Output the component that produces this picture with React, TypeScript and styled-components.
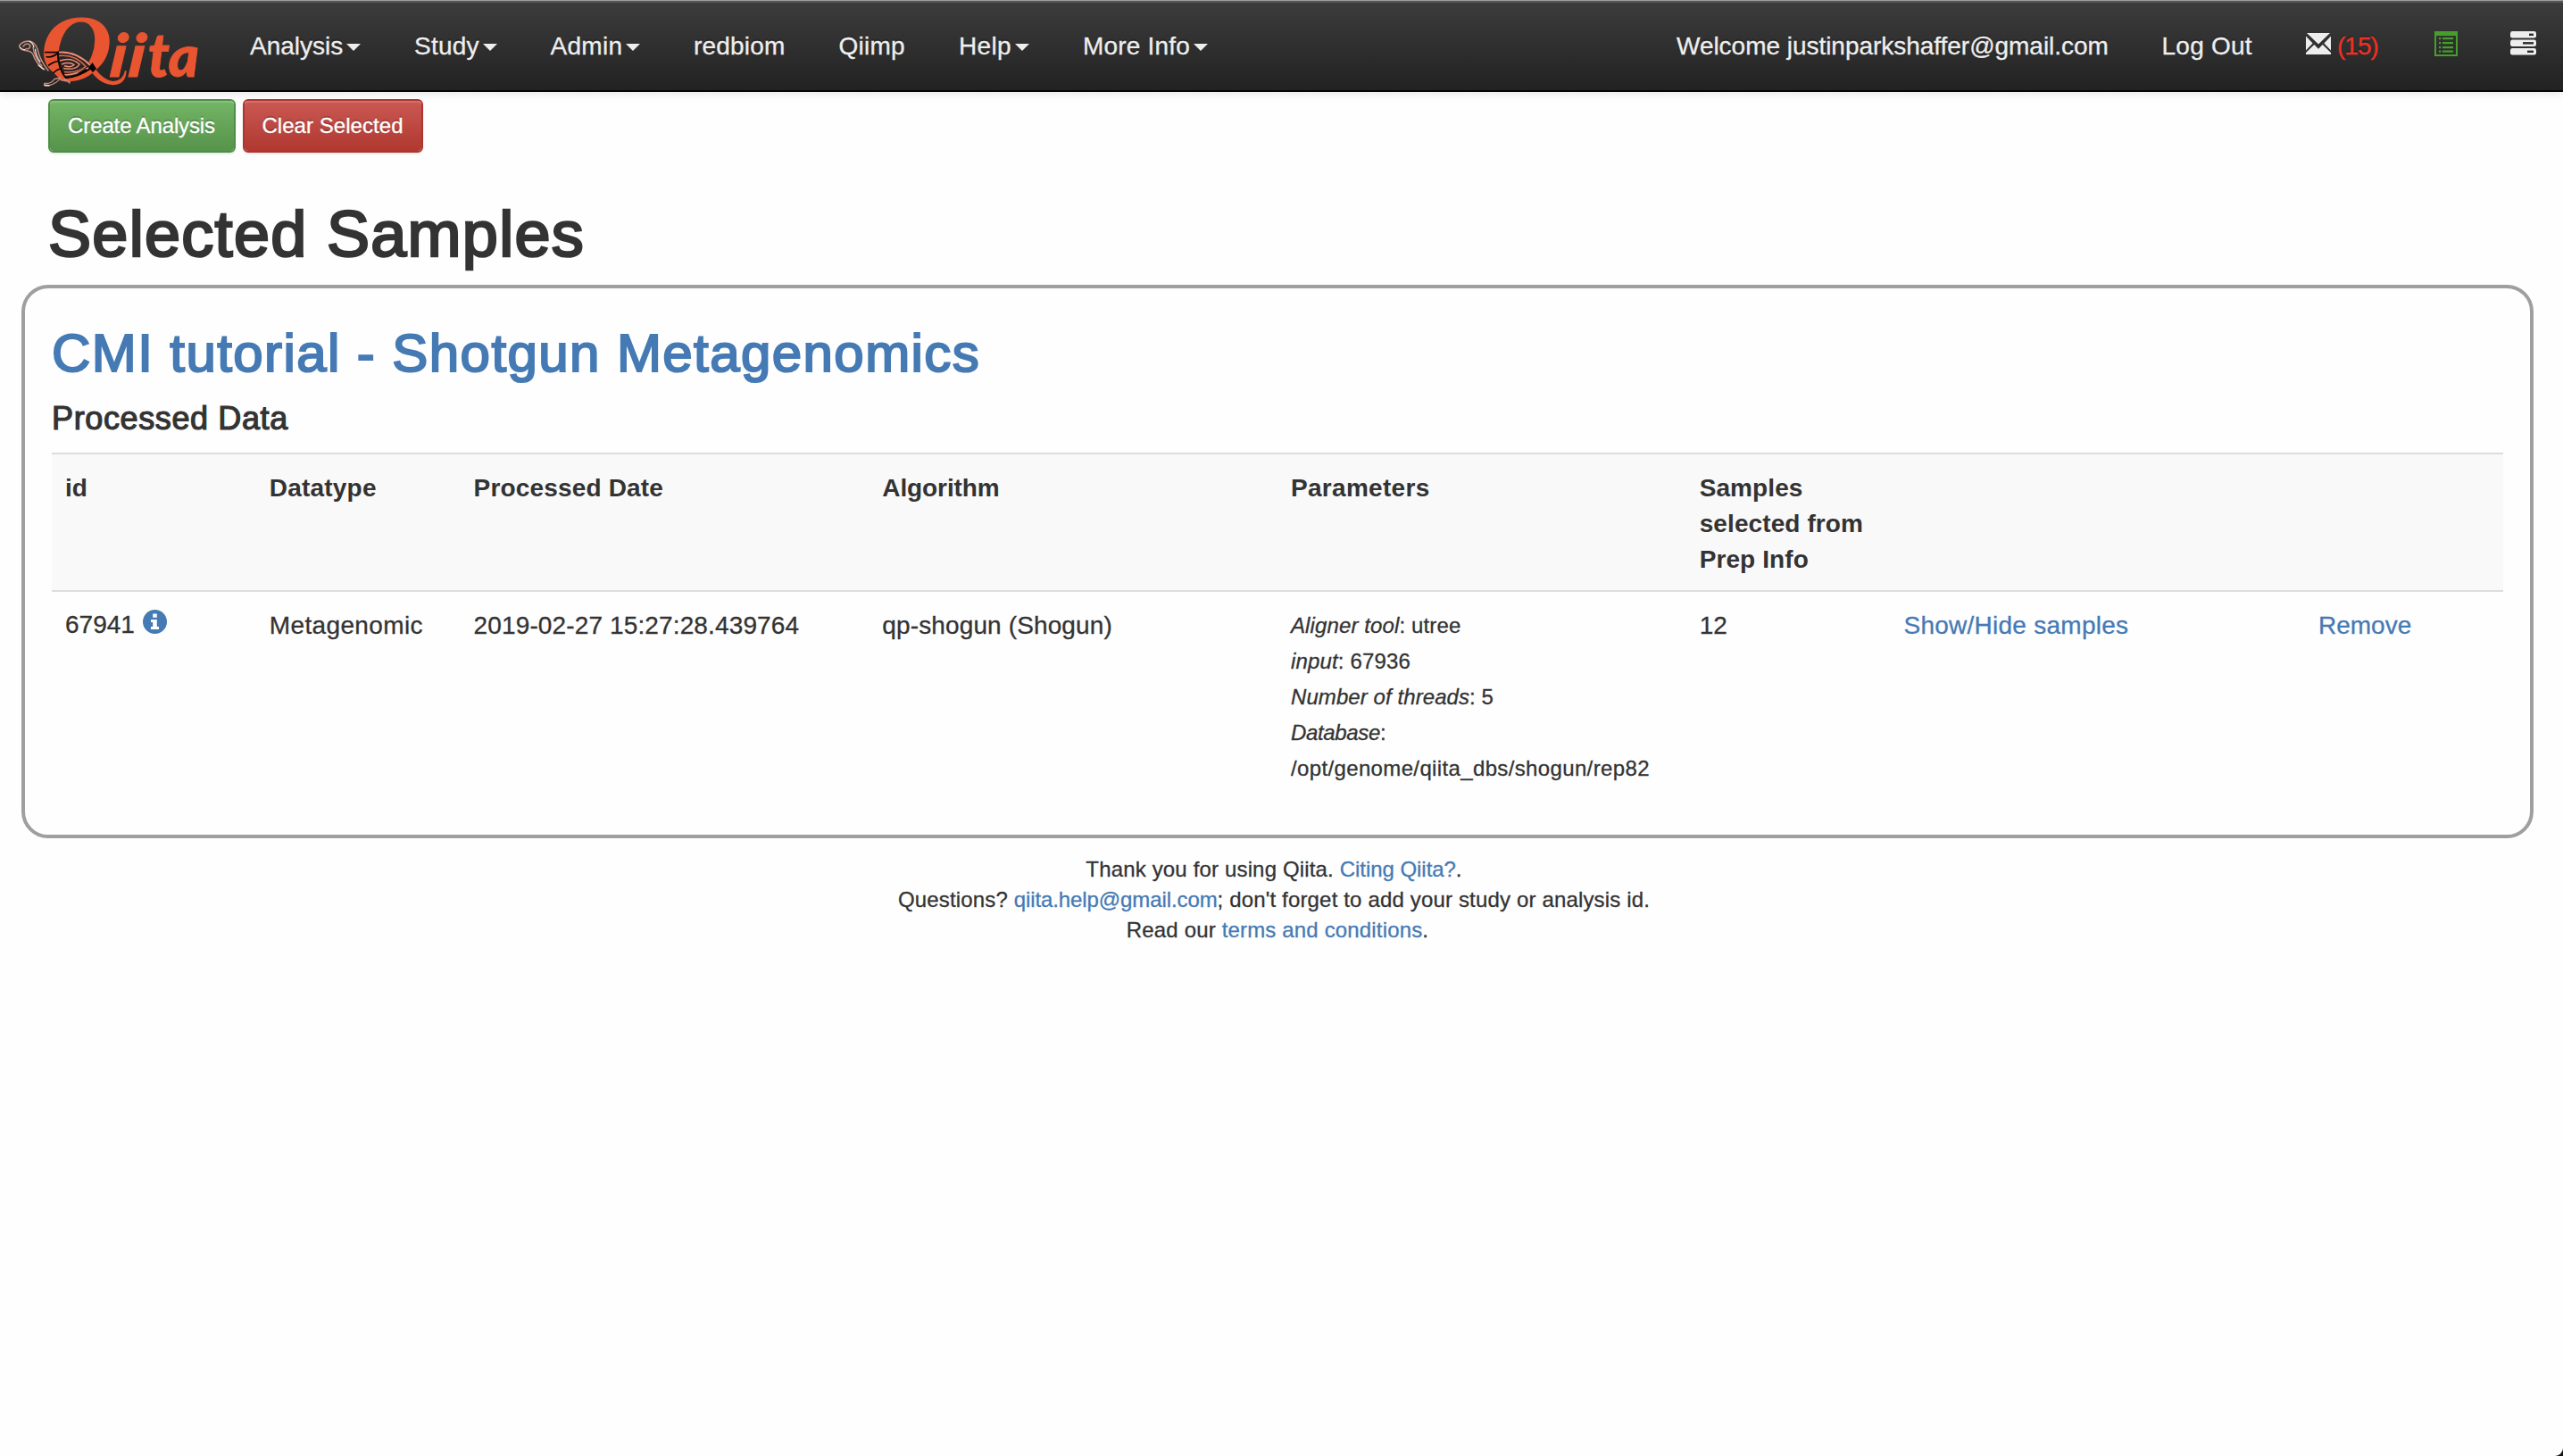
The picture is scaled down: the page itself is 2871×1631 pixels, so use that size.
import React from "react";
import styled, { createGlobalStyle } from "styled-components";

const LINK = "#457ab4";

const GlobalStyle = createGlobalStyle`
  *, *::before, *::after { box-sizing: border-box; }
  html { background: #171219; }
  body {
    margin: 0;
    font-family: "Liberation Sans", Arial, sans-serif;
    font-size: 28px;
    line-height: 40px;
    color: #333;
    -webkit-text-stroke: 0.3px currentColor;
    overflow: hidden;
  }
`;

const Page = styled.div`
  display: flex;
  flex-direction: column;
  height: 1631px;
  background: #fefefe;
  border-bottom-right-radius: 9px;
`;

const TopEdge = styled.div`
  height: 1px;
  margin-bottom: -1px;
  background: #9a9d9c;
  z-index: 1;
`;

const Navbar = styled.nav`
  display: flex;
  align-items: flex-start;
  height: 103px;
  padding-top: 29px;
  border-top: 3px solid #555857;
  border-bottom: 2px solid #060606;
  background: linear-gradient(to bottom, #3c3c3c, #222);
  background-clip: padding-box;
  box-shadow: 0 2px 10px rgba(0, 0, 0, 0.1);
  color: #eee;
  text-shadow: 0 -2px 0 rgba(0, 0, 0, 0.25);
`;

const Brand = styled.a`
  flex: none;
  width: 250px;
  height: 98px;
  margin-top: -29px;
`;

const LogoArt = styled.svg`
  display: block;
  overflow: visible;
  -webkit-text-stroke: 0;
  text-shadow: none;
`;

const NavGroup = styled.div<{ $end?: boolean }>`
  display: flex;
  margin-left: ${(p) => (p.$end ? "auto" : "0")};
`;

const NavItem = styled.a<{ $w: number; $ls?: number }>`
  display: flex;
  box-sizing: content-box;
  width: ${(p) => p.$w}px;
  padding: 0 30px;
  letter-spacing: ${(p) => p.$ls ?? 0}px;
  white-space: nowrap;
`;

const Caret = styled.span`
  flex: none;
  margin: 17px 0 0 auto;
  width: 0;
  height: 0;
  border-top: 8px solid #eee;
  border-left: 8px solid transparent;
  border-right: 8px solid transparent;
`;

const Unread = styled.span`
  margin-left: 7px;
  color: #ee3124;
  letter-spacing: -1px;
`;

const Icon = styled.svg<{ $w: number; $h: number; $top?: number; $left?: number }>`
  flex: none;
  display: block;
  width: ${(p) => p.$w}px;
  height: ${(p) => p.$h}px;
  margin-top: ${(p) => p.$top ?? 0}px;
  margin-left: ${(p) => p.$left ?? 0}px;
`;

const Actions = styled.div`
  display: flex;
  gap: 8px;
  padding: 8px 54px 0;
`;

const Button = styled.button<{ $kind: "success" | "danger"; $w: number; $ls: number }>`
  width: ${(p) => p.$w}px;
  height: 60px;
  padding: 0 1px 0 0;
  border: 2px solid ${(p) => (p.$kind === "success" ? "#4e8f46" : "#ae3530")};
  border-radius: 6px;
  background: ${(p) =>
    p.$kind === "success"
      ? "linear-gradient(to bottom, #74b566, #56934b)"
      : "linear-gradient(to bottom, #ca5953, #b03830)"};
  background-clip: padding-box;
  box-shadow: inset 0 2px 0 rgba(255, 255, 255, 0.15), 0 2px 2px rgba(0, 0, 0, 0.075);
  color: #fff;
  font: 24px/36px "Liberation Sans", Arial, sans-serif;
  letter-spacing: ${(p) => p.$ls}px;
  text-shadow: 0 -2px 0 rgba(0, 0, 0, 0.2);
  white-space: nowrap;
`;

const PageTitle = styled.h1`
  margin: 51px 54px 17px;
  font-size: 72px;
  font-weight: 400;
  line-height: 80px;
  letter-spacing: 1.3px;
  -webkit-text-stroke: 2.6px currentColor;
`;

const Card = styled.section`
  margin: 0 33px 0 24px;
  height: 620px;
  padding: 40px 30px 0;
  border: 4px solid #9f9f9f;
  border-radius: 30px;
`;

const StudyTitle = styled.h2`
  margin: 0;
  font-size: 60px;
  font-weight: 400;
  line-height: 66px;
  letter-spacing: 1.42px;
  color: ${LINK};
  -webkit-text-stroke: 2.1px currentColor;
`;

const SectionTitle = styled.h3`
  margin: 20px 0 18px;
  font-size: 36px;
  font-weight: 400;
  line-height: 40px;
  letter-spacing: 0.62px;
  -webkit-text-stroke: 1.2px currentColor;
`;

const Row = styled.div<{ $head?: boolean }>`
  display: grid;
  grid-template-columns: 228.8px 228.8px 457.7px 457.7px 457.7px 228.8px 464.5px 1fr;
  border-top: 2px solid #ddd;
  background: ${(p) => (p.$head ? "#f9f9f9" : "transparent")};
  font-weight: ${(p) => (p.$head ? 700 : 400)};
  -webkit-text-stroke-width: ${(p) => (p.$head ? 0 : 0.3)}px;
`;

const Cell = styled.div<{ $ls?: number }>`
  padding: 18px 17px 14px 15px;
  letter-spacing: ${(p) => p.$ls ?? 0}px;
`;

const IdCell = styled(Cell)`
  display: flex;
  padding-top: 17px;
`;

const Param = styled.div<{ $ls: number }>`
  font-size: 24px;
  letter-spacing: ${(p) => p.$ls}px;
`;

const ParamName = styled.i<{ $ls: number }>`
  letter-spacing: ${(p) => p.$ls}px;
`;

const Link = styled.a<{ $ls?: number }>`
  color: ${LINK};
  letter-spacing: ${(p) => (p.$ls === undefined ? "inherit" : `${p.$ls}px`)};
`;

const Footer = styled.footer`
  padding: 18px 9px 0 0;
  font-size: 24px;
  line-height: 34.2px;
  letter-spacing: 0.16px;
  text-align: center;
`;

const FooterLine = styled.div<{ $shift?: boolean }>`
  padding-right: ${(p) => (p.$shift ? 8 : 0)}px;
`;

const Logo = () => (
  <LogoArt width="250" height="98" viewBox="0 3 250 98">
    <defs>
      <clipPath id="ring">
        <path d="M40 0 H130 V70 L107 79 L96 86 Q86 91 76 90.5 L40 92 Z" />
      </clipPath>
    </defs>
    <g clipPath="url(#ring)">
      <text
        transform="translate(45 84.5) scale(1.12 1)"
        fill="#e95530"
        fontFamily="Liberation Serif"
        fontWeight="700"
        fontStyle="italic"
        fontSize="100"
      >
        Q
      </text>
    </g>
    <g
      fill="#e95530"
      stroke="#e95530"
      strokeWidth="0.9"
      fontFamily="Lato"
      fontWeight="900"
      fontStyle="italic"
      fontSize="65"
    >
      <text transform="translate(121.8 86) skewX(-6) scale(1.1 1.02)">i</text>
      <text transform="translate(142.4 86) skewX(-6) scale(1.1 1.02)">i</text>
      <text transform="translate(165.8 86) scale(1 1.04)">t</text>
      <text transform="translate(188.8 86)">a</text>
    </g>

    <path d="M64.5 57 Q84 55 101 71 L107 79 Q92 89 74 88 Q64 74 64.5 57 Z" fill="#2a2423" />
    <path d="M50 58 H65 Q64 75 73 88 L70 90 Q60 84 55 73 Z" fill="#e95530" />
    <path d="M70 88 Q86 88 102 77 L106 80 Q90 94 72 90.5 Z" fill="#e95530" />
    <g fill="none" stroke="#e98f78" strokeWidth="1.5">
      <path d="M66 58.6 Q85 57 101 73" strokeWidth="1.9" />
      <path d="M66 62.5 Q84 60.5 96 74.5 Q87 82 72 80.5" stroke="#e06a4c" />
      <path d="M67 68 Q80 63.5 89 72 Q85 79 71 76.5" />
      <path d="M69 72 Q78 69 83 72.5 Q80 76 72 73.8" />
      <path d="M72 84 Q86 83.5 99 76" />
    </g>
    <g fill="none" stroke="#0b0706" strokeWidth="1.7">
      <path d="M50 58.6 H65" />
      <path d="M51.5 63.5 Q58 65 65 59.5" />
      <path d="M54 73.5 Q60 69 65.5 68.5" />
      <path d="M59.5 82 Q64 77.5 68 77" />
      <path d="M64.8 58 Q64 75 74 88" />
      <path d="M73 87.3 Q88 86.5 104 75" />
      <path d="M88 83 L97 78" strokeWidth="3" />
    </g>
    <path
      d="M102 78 L107 77.5 Q117 90.5 127 91 Q138 90 140 79 L141.6 79.2 Q141 94.5 127 95.2 Q112 94.5 102 80 Z"
      fill="#e95530"
    />
    <path d="M103.5 70 L108 77 L104 81 L99.5 76 Z" fill="#080606" />

    <g fill="none" strokeLinecap="round">
      <g stroke="#c98e7e" strokeWidth="1.4">
        <path d="M21.6 51 Q25 46 33 46 Q39 47 42 55 Q44 65 51 75 L54 79" />
        <path d="M21.6 51 Q22 56 28 56.5 Q35 57 37 61 Q40 71 50 78" />
        <path d="M26 52 Q30 46.5 34 51 Q33 56 29 54.5" />
        <path d="M37 53 Q38.5 64 47 74" />
        <path d="M68 87 Q64 93.5 54 96 Q48 96.5 50 93.5 Q58 94 61 88.5 L68 87" />
        <path d="M68 89.5 L78 91.5 M72 88 L78 93" />
      </g>
      <g stroke="#f6e6e0" strokeWidth="1.2">
        <path d="M22.5 53 Q24.5 56 28 55.5" />
        <path d="M33 46.5 Q37 48 38 53" />
        <path d="M39.5 55 Q40 63 45 69" />
        <path d="M43 73 L48.5 77.5" />
        <path d="M50 95.3 L55 95.6" />
      </g>
    </g>
  </LogoArt>
);

const EnvelopeIcon = () => (
  <Icon $w={28} $h={24} $top={5} viewBox="0 0 28 24" fill="#eee">
    <path d="M1 0 H27 L14 12.5 Z" />
    <path d="M0 3.5 L7.6 11.5 L0 19.5 Z" />
    <path d="M28 3.5 L20.4 11.5 L28 19.5 Z" />
    <path d="M9.3 13 L14 17.8 L18.7 13 L28 22 V24 H0 V22 Z" />
  </Icon>
);

const ListIcon = () => (
  <Icon $w={26} $h={28} $top={3} $left={2} viewBox="0 0 26 28" fill="#44a02a">
    <path fillRule="evenodd" d="M0 0 H26 V28 H0 Z M2 5 V26 H24 V5 Z" />
    {[7, 12, 17, 21.5].map((y) => (
      <g key={y}>
        <rect x="5" y={y} width="2.2" height="2.2" />
        <rect x="9" y={y} width="12" height="2.2" />
      </g>
    ))}
  </Icon>
);

const TasksIcon = () => (
  <Icon $w={29} $h={27} $top={2.5} $left={-1} viewBox="0 0 29 27">
    {[
      [0, 21],
      [9.5, 14],
      [19, 19],
    ].map(([y, x]) => (
      <g key={y}>
        <rect x="0" y={y} width="29" height="7.6" rx="2.4" fill="#eee" />
        <rect x={x} y={y + 2.6} width={26 - x} height="2.4" fill="#2b2b2b" />
      </g>
    ))}
  </Icon>
);

const InfoIcon = () => (
  <Icon $w={27} $h={27} $top={3} $left={9.5} viewBox="0 0 27 27">
    <circle cx="13.5" cy="13.5" r="13.5" fill={LINK} />
    <path
      fill="#fff"
      d="M11.2 4.6 H15.8 V8.8 H11.2 Z M9 11 H15.8 V19 H18 V22 H9 V19 H11.2 V14 H9 Z"
    />
  </Icon>
);

type Entry = { label: string; w: number; ls: number; menu?: boolean };

const entries: Entry[] = [
  { label: "Analysis", w: 124, ls: 0, menu: true },
  { label: "Study", w: 92.5, ls: 0.25, menu: true },
  { label: "Admin", w: 100.5, ls: 0.3, menu: true },
  { label: "redbiom", w: 102.5, ls: 0.2 },
  { label: "Qiimp", w: 74.5, ls: 0.25 },
  { label: "Help", w: 79, ls: 0.35, menu: true },
  { label: "More Info", w: 139.5, ls: 0.2, menu: true },
];

const headings = [
  { text: "id", ls: 0 },
  { text: "Datatype", ls: 0.2 },
  { text: "Processed Date", ls: 0.17 },
  { text: "Algorithm", ls: -0.1 },
  { text: "Parameters", ls: 0.3 },
  { text: "Samples selected from Prep Info", ls: 0.1 },
];

const params = [
  { name: "Aligner tool", value: "utree", ls: 0.12, nameLs: 0.12 },
  { name: "input", value: "67936", ls: 0.15, nameLs: 0.15 },
  { name: "Number of threads", value: "5", ls: 0.08, nameLs: 0.08 },
  { name: "Database", value: "/opt/genome/qiita_dbs/shogun/rep82", ls: 0.36, nameLs: -0.35 },
];

export default function App() {
  return (
    <>
      <GlobalStyle />
      <Page>
        <TopEdge />
        <Navbar>
          <Brand>
            <Logo />
          </Brand>
          <NavGroup>
            {entries.map((e) => (
              <NavItem key={e.label} $w={e.w} $ls={e.ls}>
                {e.label}
                {e.menu && <Caret />}
              </NavItem>
            ))}
          </NavGroup>
          <NavGroup $end>
            <NavItem $w={483.5} $ls={-0.03}>
              Welcome justinparkshaffer@gmail.com
            </NavItem>
            <NavItem $w={101.5} $ls={0.25}>
              Log Out
            </NavItem>
            <NavItem $w={82}>
              <EnvelopeIcon />
              <Unread>(15)</Unread>
            </NavItem>
            <NavItem $w={28}>
              <ListIcon />
            </NavItem>
            <NavItem $w={28}>
              <TasksIcon />
            </NavItem>
          </NavGroup>
        </Navbar>
        <Actions>
          <Button $kind="success" $w={210} $ls={-0.13}>
            Create Analysis
          </Button>
          <Button $kind="danger" $w={202} $ls={0.05}>
            Clear Selected
          </Button>
        </Actions>
        <PageTitle>Selected Samples</PageTitle>
        <Card>
          <StudyTitle>CMI tutorial - Shotgun Metagenomics</StudyTitle>
          <SectionTitle>Processed Data</SectionTitle>
          <Row $head>
            {headings.map((h) => (
              <Cell key={h.text} $ls={h.ls}>
                {h.text}
              </Cell>
            ))}
          </Row>
          <Row>
            <IdCell>
              67941
              <InfoIcon />
            </IdCell>
            <Cell $ls={0.36}>Metagenomic</Cell>
            <Cell $ls={0.13}>2019-02-27 15:27:28.439764</Cell>
            <Cell $ls={0.13}>qp-shogun (Shogun)</Cell>
            <Cell>
              {params.map((p) => (
                <Param key={p.name} $ls={p.ls}>
                  <ParamName $ls={p.nameLs}>{p.name}</ParamName>: {p.value}
                </Param>
              ))}
            </Cell>
            <Cell>12</Cell>
            <Cell $ls={0.26}>
              <Link>Show/Hide samples</Link>
            </Cell>
            <Cell>
              <Link>Remove</Link>
            </Cell>
          </Row>
        </Card>
        <Footer>
          <FooterLine $shift>
            Thank you for using Qiita. <Link $ls={-0.05}>Citing Qiita?</Link>.
          </FooterLine>
          <FooterLine $shift>
            Questions? <Link $ls={-0.1}>qiita.help@gmail.com</Link>; don't forget to add your study or
            analysis id.
          </FooterLine>
          <FooterLine>
            Read our <Link>terms and conditions</Link>.
          </FooterLine>
        </Footer>
      </Page>
    </>
  );
}
